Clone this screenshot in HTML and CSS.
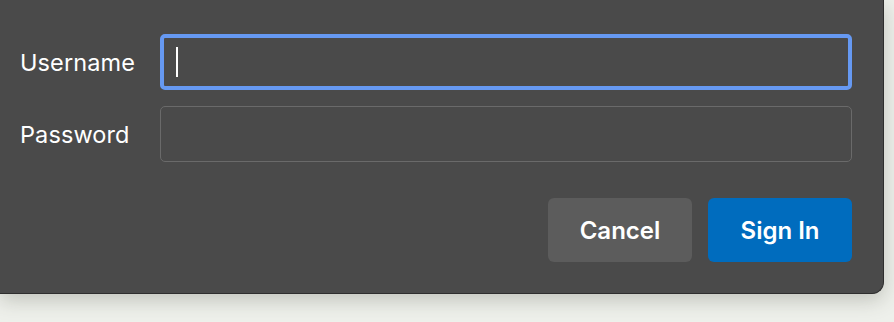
FILE: index.html
```html
<!DOCTYPE html>
<html>
<head>
<meta charset="utf-8">
<link rel="stylesheet" href="styles.css">
</head>
<body>
<div class="dialog">
  <form class="form">
    <div class="row">
      <label class="label" for="u">Username</label>
      <div class="field focused"><span class="caret"></span></div>
    </div>
    <div class="row">
      <label class="label" for="p">Password</label>
      <div class="field"></div>
    </div>
    <div class="actions">
      <button type="button" class="btn cancel">Cancel</button>
      <button type="button" class="btn primary">Sign In</button>
    </div>
  </form>
</div>
</body>
</html>
```
FILE: styles.css
```css
html, body {
  margin: 0;
  padding: 0;
}
body {
  width: 894px;
  height: 322px;
  background: #eef0eb;
  font-family: Inter, "Liberation Sans", sans-serif;
  overflow: hidden;
}
.dialog {
  width: 883px;
  height: 293px;
  background: #4a4a4a;
  border-right: 1px solid #2e2e2e;
  border-bottom: 1px solid #2e2e2e;
  border-bottom-right-radius: 12px;
  box-shadow: 0 6px 20px rgba(60, 64, 50, 0.26);
  box-sizing: content-box;
}
.form {
  padding: 34px 31px 0 20px;
  display: flex;
  flex-direction: column;
  gap: 16px;
}
.row {
  display: flex;
  align-items: center;
  height: 56px;
}
.label {
  width: 140px;
  color: #ffffff;
  font-size: 23.5px;
  font-weight: 400;
  letter-spacing: 0.1px;
}
.field {
  flex: 1;
  height: 56px;
  box-sizing: border-box;
  border: 1px solid #6a6a6a;
  border-radius: 5px;
  display: flex;
  align-items: center;
  padding-left: 16px;
}
.field.focused {
  border: 4px solid #6699f2;
  border-radius: 5px;
  padding-left: 12px;
}
.caret {
  width: 2px;
  height: 30px;
  background: #ffffff;
}
.actions {
  display: flex;
  justify-content: flex-end;
  gap: 16px;
  margin-top: 20px;
}
.btn {
  width: 144px;
  height: 64px;
  border: none;
  border-radius: 6px;
  color: #ffffff;
  font-family: Inter, "Liberation Sans", sans-serif;
  font-size: 24px;
  font-weight: 600;
  padding: 0;
}
.cancel {
  background: #5c5c5c;
}
.primary {
  background: #006cbe;
}
```
